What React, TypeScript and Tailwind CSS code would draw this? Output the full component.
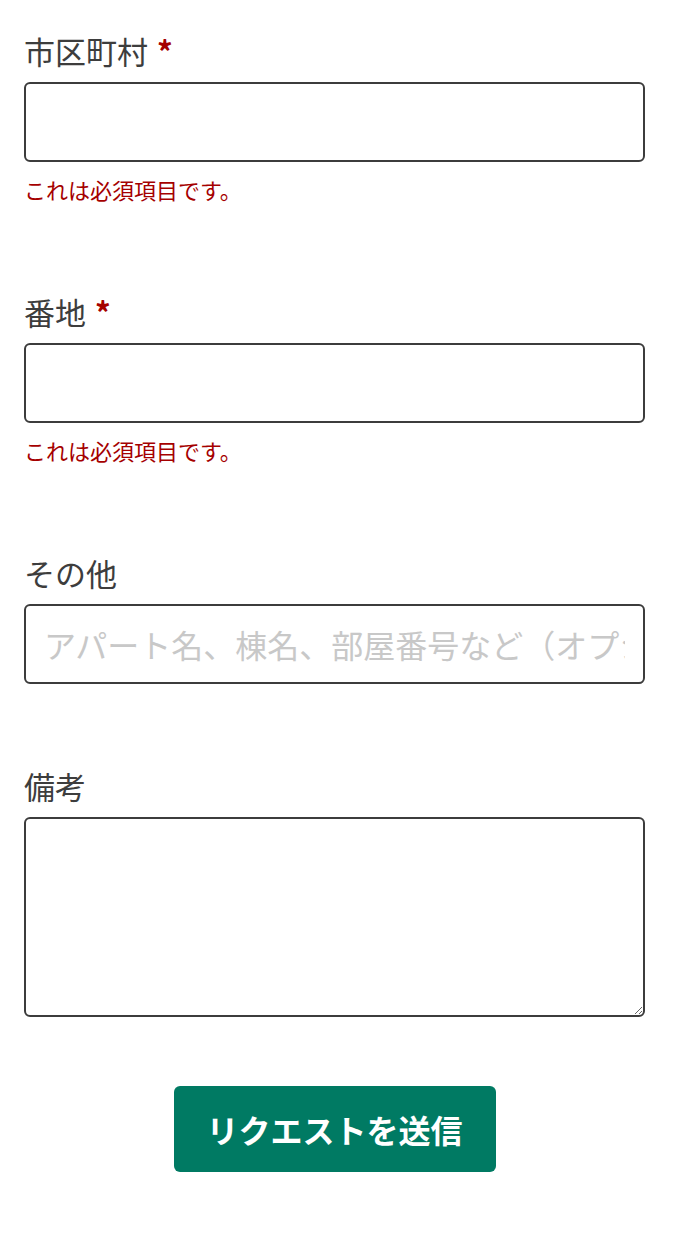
import React from 'react';

const font = { fontFamily: '"Noto Sans CJK JP", "Noto Sans", sans-serif' };

const Label = ({ text, required }: { text: string; required?: boolean }) => (
  <label className="block text-[31px] leading-[40px] text-[#3d3d3d] mb-[11px]">
    {text}
    {required && <span className="ml-[9px] font-bold text-[#a50000]">*</span>}
  </label>
);

const ErrorText = () => (
  <p className="mt-[13px] text-[22px] leading-[28px] text-[#a50000]">これは必須項目です。</p>
);

const inputCls =
  'block w-full h-[80px] rounded-[6px] border-2 border-[#3c3c3c] bg-white px-[18px] text-[32px] text-[#333] placeholder:text-[#c8c8c8] outline-none';

export default function App() {
  return (
    <div style={font} className="min-h-[1241px] bg-white pl-[24px] pr-[30px] pt-[31px]">
      <div className="mb-[89px]">
        <Label text="市区町村" required />
        <input className={inputCls} />
        <ErrorText />
      </div>

      <div className="mb-[89px]">
        <Label text="番地" required />
        <input className={inputCls} />
        <ErrorText />
      </div>

      <div className="mb-[82px]">
        <Label text="その他" />
        <input className={inputCls} placeholder="アパート名、棟名、部屋番号など（オプション）" />
      </div>

      <div>
        <Label text="備考" />
        <textarea className="block w-full h-[200px] rounded-[6px] border-2 border-[#3c3c3c] bg-white px-[18px] py-[12px] text-[32px] outline-none" />
      </div>

      <div className="flex justify-center mt-[69px]">
        <button className="w-[322px] h-[86px] rounded-[6px] bg-[#007a63] text-white text-[32px] font-bold">
          リクエストを送信
        </button>
      </div>
    </div>
  );
}
